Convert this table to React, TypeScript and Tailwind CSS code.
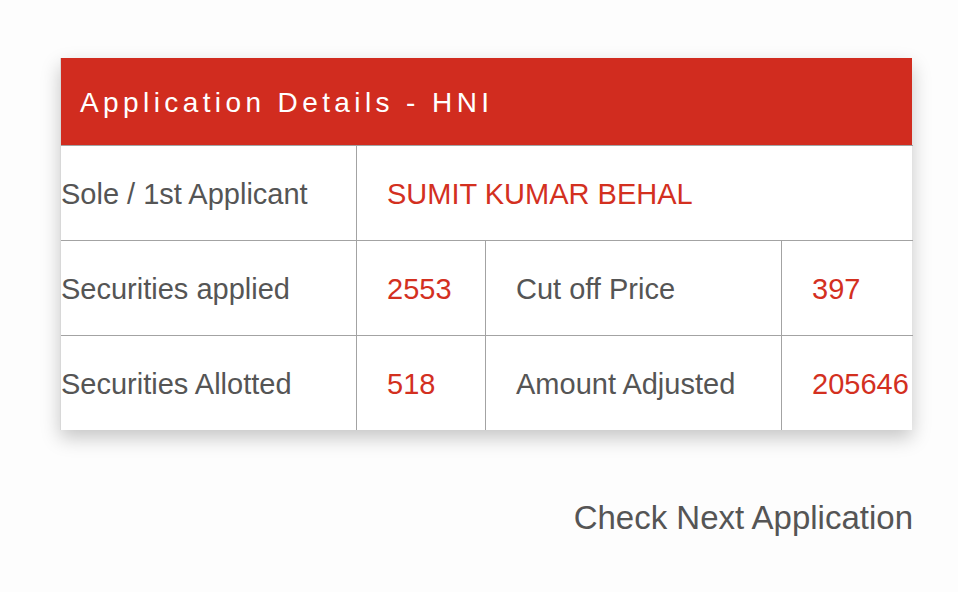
import { FC } from 'react';

const font = { fontFamily: '"Liberation Sans", Arial, sans-serif' };

const Label: FC<{ text: string; className?: string }> = ({ text, className }) => (
  <div className={`flex items-center pt-[4px] text-[29px] text-[#555555] border-t border-[#a3a3a3] ${className ?? ''}`}>
    {text}
  </div>
);

const Value: FC<{ text: string; className?: string }> = ({ text, className }) => (
  <div className={`flex items-center pt-[4px] pl-[30px] text-[29px] text-[#d3301f] border-t border-l border-[#a3a3a3] overflow-hidden whitespace-nowrap ${className ?? ''}`}>
    {text}
  </div>
);

export default function App() {
  return (
    <div className="w-[958px] h-[592px] bg-[#fdfdfd] pt-[58px] pl-[60px]" style={font}>
      {/* Details card */}
      <div className="w-[852px] bg-white border-l border-[#d8d8d8] shadow-[0_8px_18px_rgba(0,0,0,0.22)]">
        <div className="h-[87px] bg-[#d12c1f] flex items-center pl-[19px] pt-[3px] text-white text-[28px] tracking-[4.4px]">
          Application Details - HNI
        </div>
        <div className="grid grid-cols-[295px_129px_296px_132px] grid-rows-[95px_95px_95px]">
          <Label text="Sole / 1st Applicant" />
          <Value text="SUMIT KUMAR BEHAL" className="col-span-3" />

          <Label text="Securities applied" />
          <Value text="2553" />
          <Value text="Cut off Price" className="!text-[#555555]" />
          <Value text="397" />

          <Label text="Securities Allotted" />
          <Value text="518" />
          <Value text="Amount Adjusted" className="!text-[#555555]" />
          <Value text="205646" />
        </div>
      </div>

      <div className="w-[853px] flex justify-end mt-[63px]">
        <span className="text-[33px] text-[#555555]">Check Next Application</span>
      </div>
    </div>
  );
}
